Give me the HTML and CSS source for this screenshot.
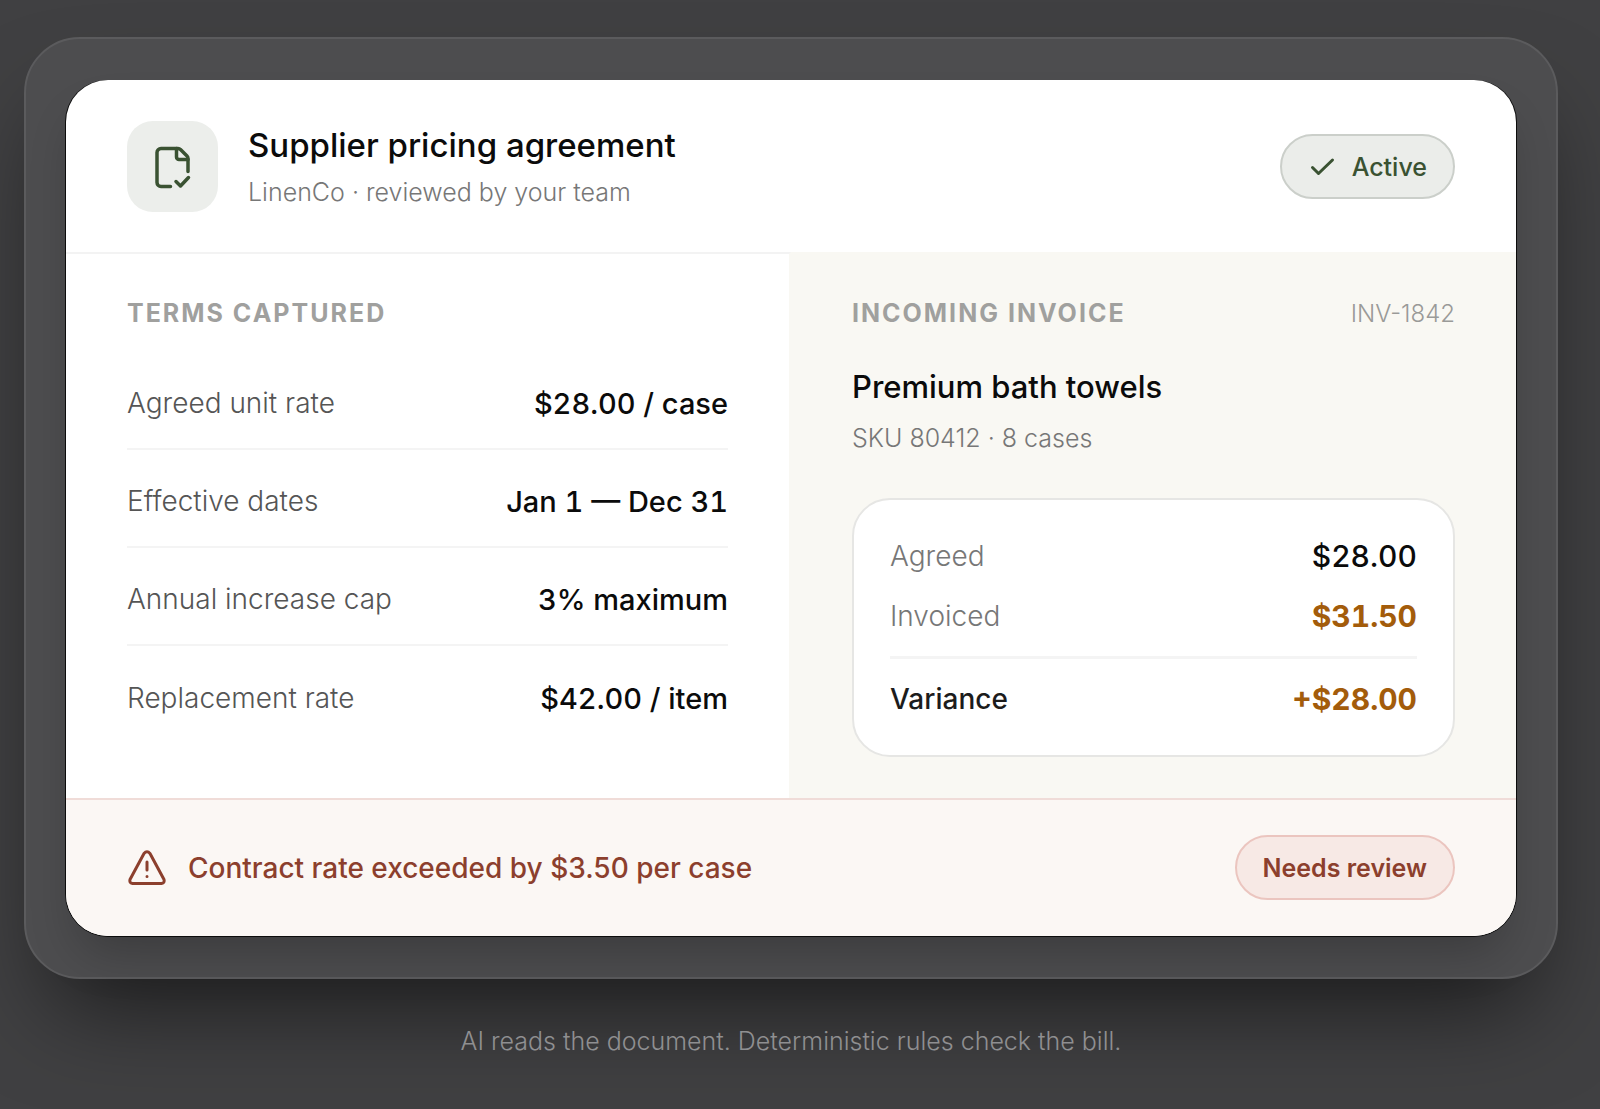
FILE: index.html
```html
<!DOCTYPE html>
<html lang="en">
<head>
  <meta charset="UTF-8">
  <meta name="viewport" content="width=device-width, initial-scale=1.0">
  <title>Supplier pricing agreement</title>
  <link rel="stylesheet" href="styles.css">
</head>
<body>
  <main class="frame">
    <article class="card">
      <header class="card-header">
        <div class="doc-icon">
          <svg width="44" height="44" viewBox="0 0 44 44" fill="none" stroke="currentColor" stroke-width="3.5" stroke-linecap="round" stroke-linejoin="round" aria-hidden="true">
            <path d="M19.5 41.5H10a4 4 0 0 1-4-4V7.5a4 4 0 0 1 4-4h17q1.5 0 2.5 1l6.5 6.5q1 1 1 2.5V26.5"/>
            <path d="M25.5 3.5v8.5a2.5 2.5 0 0 0 2.5 2.5h9"/>
            <path d="M25 36.5l4.5 4.5 8-8.5"/>
          </svg>
        </div>
        <div class="heading">
          <h1>Supplier pricing agreement</h1>
          <p>LinenCo · reviewed by your team</p>
        </div>
        <span class="pill pill-active">
          <svg width="28" height="28" viewBox="0 0 28 28" fill="none" stroke="currentColor" stroke-width="3" stroke-linecap="round" stroke-linejoin="round" aria-hidden="true">
            <path d="M4.5 14.5l6 6L24.5 7"/>
          </svg>
          Active
        </span>
      </header>

      <div class="columns">
        <section class="terms">
          <h2>Terms captured</h2>
          <dl class="term-list">
            <div class="term"><dt>Agreed unit rate</dt><dd>$28.00 / case</dd></div>
            <div class="term"><dt>Effective dates</dt><dd>Jan 1 — Dec 31</dd></div>
            <div class="term"><dt>Annual increase cap</dt><dd>3% maximum</dd></div>
            <div class="term"><dt>Replacement rate</dt><dd>$42.00 / item</dd></div>
          </dl>
        </section>

        <section class="invoice">
          <div class="invoice-top">
            <h2>Incoming invoice</h2>
            <span class="invoice-no">INV-1842</span>
          </div>
          <h3>Premium bath towels</h3>
          <p class="sku">SKU 80412 · 8 cases</p>
          <dl class="compare">
            <div class="compare-row"><dt>Agreed</dt><dd>$28.00</dd></div>
            <div class="compare-row over"><dt>Invoiced</dt><dd>$31.50</dd></div>
            <div class="compare-row variance over"><dt>Variance</dt><dd>+$28.00</dd></div>
          </dl>
        </section>
      </div>

      <footer class="alert">
        <svg width="40" height="40" viewBox="0 0 40 40" fill="none" stroke="currentColor" stroke-width="3" stroke-linecap="round" stroke-linejoin="round" aria-hidden="true">
          <path d="M17 5.5L3 31.5q-1 3.500 2.5 4h29q3.500-.5 2.5-4L23 5.500q-3-3.500-6 0z"/>
          <path d="M20 14v8M20 28.500v.1"/>
        </svg>
        <p>Contract rate exceeded by $3.50 per case</p>
        <span class="pill pill-review">Needs review</span>
      </footer>
    </article>
  </main>
  <p class="caption">AI reads the document. Deterministic rules check the bill.</p>
</body>
</html>
```
FILE: styles.css
```css
* {
  box-sizing: border-box;
}

body {
  margin: 0;
  padding: 37px 42px 40px 24px;
  min-height: 100vh;
  background-color: #404042;
  font-family: Inter, "Liberation Sans", sans-serif;
  color: #0b0b0b;
}

h1, h2, h3, p, dl, dd {
  margin: 0;
}

.frame {
  padding: 41px 40px;
  background-color: #4d4d4f;
  border: 2px solid #5b5b5d;
  border-radius: 56px;
  box-shadow: 0 52px 96px -28px rgba(0, 0, 0, 0.6);
}

.card {
  overflow: hidden;
  background-color: #fff;
  border-radius: 42px;
  box-shadow: 0 1px 0 #0c0c0c, 1px 0 0 #0c0c0c, -1px 0 0 #0c0c0c, 0 28px 48px -12px rgba(0, 0, 0, 0.24);
}

.card-header {
  display: flex;
  align-items: center;
  gap: 30px;
  padding: 41px 61px 40px;
}

.doc-icon {
  display: flex;
  align-items: center;
  justify-content: center;
  width: 91px;
  height: 91px;
  border-radius: 26px;
  background-color: #eceeeb;
  color: #3a5232;
}

.heading {
  flex: 1;
}

h1 {
  font-size: 33px;
  font-weight: 500;
  line-height: 48px;
}

.heading p {
  margin-top: 3px;
  font-size: 25px;
  font-weight: 300;
  line-height: 40px;
  color: #777;
}

.pill {
  display: flex;
  align-items: center;
  gap: 16px;
  height: 65px;
  padding: 0 26px;
  border: 2px solid;
  border-radius: 33px;
  font-size: 25px;
}

.pill-active {
  background-color: #ebedea;
  border-color: #cbcfca;
  color: #3a5232;
  font-weight: 500;
}

.pill-review {
  background-color: #f7e9e5;
  border-color: #ebc5bf;
  color: #8c3f2d;
  font-weight: 600;
}

.columns {
  display: grid;
  grid-template-columns: 1fr 1fr;
}

.terms {
  padding: 41px 61px 40px;
  border-top: 2px solid #f3f3f3;
  border-right: 2px solid #f9f8f3;
}

.invoice {
  padding: 43px 61px 41px;
  background-color: #f9f8f3;
}

h2 {
  font-size: 25px;
  font-weight: 700;
  line-height: 36px;
  letter-spacing: 2px;
  text-transform: uppercase;
  color: #a0a09e;
}

.term-list {
  margin-top: 21px;
}

.term {
  display: flex;
  align-items: center;
  justify-content: space-between;
  height: 98px;
  padding-top: 6px;
  border-bottom: 2px solid #f4f4f4;
}

.term:last-child {
  border-bottom: 0;
}

dt {
  font-size: 28px;
  font-weight: 300;
  color: #555;
}

dd {
  font-size: 29px;
  font-weight: 500;
  font-variant-numeric: tabular-nums;
}

.invoice-top {
  display: flex;
  align-items: center;
  justify-content: space-between;
}

.invoice-no {
  font-size: 24px;
  font-weight: 300;
  color: #9a9a98;
}

h3 {
  margin-top: 32px;
  font-size: 31px;
  font-weight: 500;
  line-height: 48px;
}

.sku {
  margin-top: 7px;
  font-size: 25px;
  font-weight: 300;
  line-height: 40px;
  color: #777;
}

.compare {
  margin-top: 40px;
  padding: 26px 36px 17px;
  background-color: #fff;
  border: 2px solid #e6e6e4;
  border-radius: 38px;
}

.compare-row {
  display: flex;
  align-items: center;
  justify-content: space-between;
  height: 60px;
}

.compare-row dt {
  color: #777;
}

.compare-row dd {
  font-size: 30px;
}

.compare-row.over dd {
  color: #a35c0b;
  font-weight: 700;
}

.compare-row.variance {
  height: 82px;
  margin-top: 10px;
  border-top: 3px solid #f4f4f4;
}

.compare-row.variance dt {
  color: #1c1c1c;
  font-weight: 500;
}

.alert {
  display: flex;
  align-items: center;
  gap: 21px;
  padding: 35px 61px 36px;
  background-color: #fbf7f4;
  border-top: 2px solid #f0dcd8;
  color: #8c3f2d;
}

.alert p {
  flex: 1;
  font-size: 28px;
  font-weight: 500;
}

.caption {
  /* keeps the text above the frame's shadow */
  position: relative;
  margin-top: 44px;
  text-align: center;
  font-size: 25px;
  font-weight: 300;
  line-height: 36px;
  color: #8f8f91;
}
```
